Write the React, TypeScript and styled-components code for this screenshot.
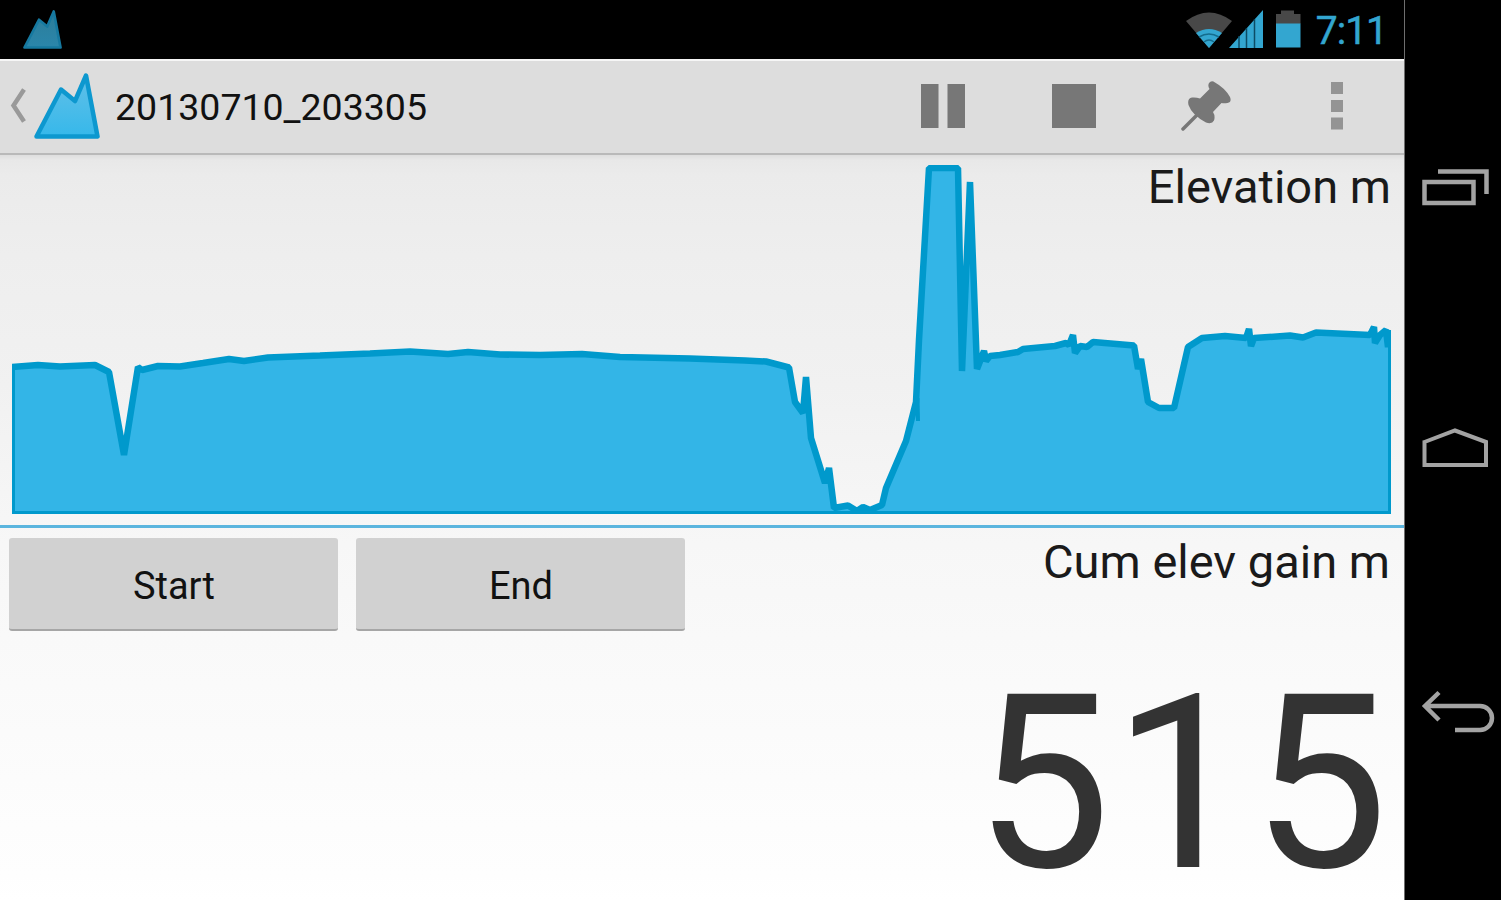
import React from 'react';
import styled, { createGlobalStyle } from 'styled-components';

const GlobalStyle = createGlobalStyle`
  * { box-sizing: border-box; }
  body { margin: 0; background: #000; font-family: Roboto, "Liberation Sans", sans-serif; overflow: hidden; }
`;

const Device = styled.div`
  display: grid;
  grid-template-columns: 1404px 97px;
  width: 1501px;
  height: 900px;
  background: #000;
`;

const Screen = styled.main`
  display: flex;
  flex-direction: column;
  height: 900px;
  min-width: 0;
`;

const StatusBar = styled.div`
  display: flex;
  align-items: flex-start;
  justify-content: space-between;
  height: 59px;
  padding: 10px 17px 0 23px;
  flex: none;
`;

const StatusIcons = styled.div`
  display: flex;
  align-items: flex-start;
`;

const Clock = styled.span`
  margin-left: 15px;
  font-size: 39px;
  line-height: 43px;
  letter-spacing: -1px;
  color: #33a6d0;
  -webkit-text-stroke: 0.5px #33a6d0;
`;

const ActionBar = styled.header`
  display: flex;
  align-items: center;
  height: 96px;
  flex: none;
  padding: 0 0 2px 9px;
  background: #dddddd;
  border-top: 2px solid #f6f6f6;
  border-bottom: 2px solid #b9b9b9;
`;

const BackLink = styled.a`
  display: flex;
  align-items: center;
  gap: 7px;
`;

const Title = styled.h1`
  margin: 1px 0 0 15px;
  font-size: 37.5px;
  line-height: 44px;
  font-weight: 400;
  color: #111;
`;

const Actions = styled.div`
  display: flex;
  margin-left: auto;
  padding-right: 1px;
`;

const ActionButton = styled.button`
  display: flex;
  align-items: center;
  justify-content: center;
  width: 131.5px;
  height: 90px;
  padding: 0;
  border: 0;
  background: none;
`;

const Content = styled.div`
  flex: 1;
  display: flex;
  flex-direction: column;
  min-height: 0;
  background: linear-gradient(#dedede 0, #e8e8e8 5px, #ebebeb 20px, #eeeeee 100px, #f1f1f1 230px, #f7f7f7 390px, #fafafa 530px, #fefefe 720px, #fff);
`;

const ChartPanel = styled.section`
  display: grid;
  height: 373px;
  flex: none;
  border-bottom: 3px solid #5bb5de;

  & > * { grid-area: 1 / 1; }
`;

const FieldLabel = styled.div`
  justify-self: end;
  font-size: 47px;
  line-height: 56px;
  color: #1a1a1a;
  white-space: nowrap;
`;

const ChartLabel = styled(FieldLabel)`
  margin: 4px 13px 0 0;
`;

const Dashboard = styled.section`
  display: flex;
  justify-content: space-between;
  padding: 6px 14px 0 9.4px;
`;

const ButtonRow = styled.div`
  display: flex;
  gap: 18px;
  padding-top: 4px;
`;

const HoloButton = styled.button`
  width: 329px;
  height: 93px;
  padding: 4px 0 0;
  border: 0;
  border-bottom: 2px solid #a6a6a6;
  border-radius: 3px;
  background: #d1d1d1;
  font-family: inherit;
  font-size: 38px;
  color: #111;
`;

const Reading = styled.div`
  display: flex;
  flex-direction: column;
  align-items: flex-end;
`;

const Value = styled.div`
  margin: 79px 0 0 0;
  font-size: 243px;
  line-height: 230px;
  letter-spacing: 2px;
  color: #333;
`;

const NavBar = styled.nav`
  display: flex;
  flex-direction: column;
  align-items: flex-start;
  border-left: 1px solid #6e6e6e;
  padding: 168px 0 0 16px;
`;

const NavIcon = styled.svg<{ $gap: number }>`
  display: block;
  flex: none;
  margin-bottom: ${(p) => p.$gap}px;
  fill: none;
  stroke: #a3a3a3;
  stroke-width: 4.5;
`;

const SERIES: [number, number][] = [
  [12, 367], [38, 365], [60, 366.5], [95, 365], [109, 372], [124, 455], [138, 367], [142, 370],
  [158, 366], [180, 366.5], [203, 363], [229, 359], [244, 361], [268, 357.5], [320, 355.5], [370, 353.5],
  [410, 351.5], [448, 354], [468, 352], [500, 354.5], [540, 355], [582, 354], [620, 357], [690, 358.5],
  [745, 360.5], [766, 361.5], [789, 367.5], [795, 402], [803, 413], [806, 377], [811, 438], [825, 483],
  [829, 468], [834, 508], [848, 505.5], [857, 511], [863, 507], [870, 510], [882, 505], [886, 488],
  [906, 441], [916, 402], [919, 340], [929, 168], [958, 168], [962, 371],
  [970, 182], [977, 369], [984, 351], [986, 361], [990, 356], [1000, 355], [1018, 352], [1023, 349], [1055, 346],
  [1066, 343], [1069, 345], [1073, 335], [1075, 353], [1080, 346], [1087, 347], [1093, 342], [1134, 345.5],
  [1138, 369], [1141, 359], [1148, 402], [1159, 408], [1174, 408], [1188, 347], [1202, 338], [1225, 336],
  [1246, 338], [1249, 329], [1251, 346], [1254, 338], [1290, 335.5], [1303, 337.5], [1316, 332.5], [1370, 335],
  [1374, 327], [1375, 343], [1380, 335], [1386, 330], [1388, 347], [1390, 330],
];

const line = SERIES.map(([x, y], i) => `${i ? 'L' : 'M'}${x} ${y}`).join(' ');

const Mountain = ({ size, dim }: { size: number; dim?: boolean }) => (
  <svg width={size} height={size} viewBox="0 0 66 66">
    <defs>
      <linearGradient id={dim ? 'mtnDim' : 'mtn'} x1="0" y1="0" x2="0" y2="1">
        <stop offset="0" stopColor={dim ? '#2d7d99' : '#62c0e8'} />
        <stop offset="1" stopColor={dim ? '#2a86ab' : '#36b8ea'} />
      </linearGradient>
    </defs>
    <path
      d="M2.5 63.5 L27 16.5 L41 28 L52 2.5 L63.5 63.5 Z"
      fill={`url(#${dim ? 'mtnDim' : 'mtn'})`}
      stroke={dim ? '#1679a0' : '#0d98cf'}
      strokeWidth="4.5"
      strokeLinejoin="round"
    />
  </svg>
);

const App = () => (
  <>
    <GlobalStyle />
    <Device>
      <Screen>
        <StatusBar>
          <Mountain size={39} dim />
          <StatusIcons>
            <svg width="116" height="40" viewBox="1185 10 116 40">
              <path d="M1186 21 Q1209 4 1232 21 L1209 48 Z" fill="#484848" />
              <path d="M1196 33 Q1209 25 1222 33 L1209 48 Z" fill="#33a6d0" />
              <path d="M1199 37 Q1209 31 1219 37 M1204 42 Q1209 38 1214 42" fill="none" stroke="#156c8d" strokeWidth="1.5" />
              <path d="M1229 48 L1263 10 V48 Z" fill="#33a6d0" />
              <path d="M1239 36 V48 M1246.5 28 V48 M1254.5 19 V48" stroke="#0c4c65" strokeWidth="1.5" />
              <path d="M1276 14 H1281 V10.5 H1294 V14 H1300.5 V24 H1276 Z" fill="#484848" />
              <path d="M1276 23.5 H1300.5 V47.5 H1276 Z" fill="#33a6d0" />
            </svg>
            <Clock>7:11</Clock>
          </StatusIcons>
        </StatusBar>
        <ActionBar>
          <BackLink>
            <svg width="18" height="36" viewBox="0 0 18 36">
              <path d="M15 1.5 L4.5 17.5 L15 33.5" fill="none" stroke="#999" strokeWidth="4.5" />
            </svg>
            <Mountain size={66} />
          </BackLink>
          <Title>20130710_203305</Title>
          <Actions>
            <ActionButton aria-label="Pause">
              <svg width="46" height="46" viewBox="0 0 46 46" fill="#777">
                <path d="M1 1 H18.5 V45 H1 Z M27.5 1 H45 V45 H27.5 Z" />
              </svg>
            </ActionButton>
            <ActionButton aria-label="Stop">
              <svg width="46" height="46" viewBox="0 0 46 46" fill="#777">
                <path d="M1 1 H45 V45 H1 Z" />
              </svg>
            </ActionButton>
            <ActionButton aria-label="Pin">
              <svg width="50" height="50" viewBox="1181 81 50 50" fill="#777">
                <path d="M1209 83 Q1211.5 80 1215 82.5 Q1225 88 1230 97 Q1232 102 1227.5 103 Q1224 103.5 1221.5 103 L1213 112 Q1215.5 116 1214 120.5 Q1212 124.5 1206 122.5 Q1192 115 1188.5 105 Q1187 98.5 1192 97.5 Q1196 97 1200 98.5 L1209.5 89 Q1207.5 86 1209 83 Z" />
                <path d="M1199 113 L1183 129" fill="none" stroke="#777" strokeWidth="3.5" strokeLinecap="round" />
              </svg>
            </ActionButton>
            <ActionButton aria-label="More options">
              <svg width="12" height="48" viewBox="0 0 12 48" fill="#949494">
                <path d="M0 0 H12 V12 H0 Z M0 18 H12 V30 H0 Z M0 35.5 H12 V47.5 H0 Z" />
              </svg>
            </ActionButton>
          </Actions>
        </ActionBar>
        <Content>
          <ChartPanel>
            <svg width="1404" height="370" viewBox="0 155 1404 370">
              <clipPath id="plot">
                <rect x="12" y="165" width="1379" height="349" />
              </clipPath>
              <g clipPath="url(#plot)">
                <path d={`${line} V514 H12 Z`} fill="#33b5e7" />
                <path d={line} fill="none" stroke="#0099cc" strokeWidth="6.5" strokeLinejoin="bevel" />
                <path d="M917.5 398 L918 421" fill="none" stroke="#0099cc" strokeWidth="4" />
                <path d="M13.5 366 V512.5 H1389.5 V334" fill="none" stroke="#0099cc" strokeWidth="3" />
              </g>
            </svg>
            <ChartLabel>Elevation m</ChartLabel>
          </ChartPanel>
          <Dashboard>
            <ButtonRow>
              <HoloButton>Start</HoloButton>
              <HoloButton>End</HoloButton>
            </ButtonRow>
            <Reading>
              <FieldLabel>Cum elev gain m</FieldLabel>
              <Value>515</Value>
            </Reading>
          </Dashboard>
        </Content>
      </Screen>
      <NavBar>
        <NavIcon $gap={218} width="70" height="40" viewBox="1421 168 70 40">
          <path d="M1424.5 182 H1473.5 V203 H1424.5 Z M1438 171.5 H1486.5 V194" />
        </NavIcon>
        <NavIcon $gap={220} width="70" height="44" viewBox="1421 426 70 44">
          <path d="M1424.5 442 L1455 430.5 L1486 442 V465 H1424.5 Z" strokeWidth="4" />
        </NavIcon>
        <NavIcon $gap={0} width="76" height="46" viewBox="1421 690 76 46">
          <path d="M1439 692.5 L1425 706 L1439 720 M1425 706 H1480 A12 12 0 0 1 1480 730 H1455" />
        </NavIcon>
      </NavBar>
    </Device>
  </>
);

export default App;
